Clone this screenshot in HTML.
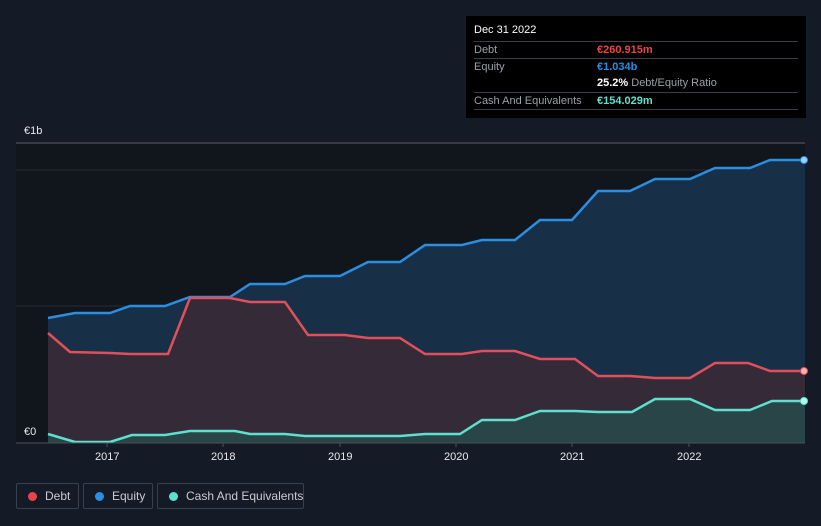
<!DOCTYPE html><html><head><style>
body{margin:0;background:#151b26;font-family:"Liberation Sans",sans-serif;width:821px;height:526px;overflow:hidden;position:relative}
.tt{position:absolute;left:466px;top:16px;width:340px;height:102px;background:#000;font-size:11px;color:#9aa0a8}
.tt .r{position:absolute;left:8px;width:324px;border-top:1px solid #3a3f47;height:16px;line-height:16px}
.tt .v{position:absolute;left:123px;font-weight:bold}
.lg{position:absolute;top:483px;height:26px;border:1px solid #3a404a;border-radius:2px;color:#c8ccd2;font-size:12px;line-height:24px;box-sizing:border-box;white-space:nowrap}
.lg i{position:absolute;left:11px;top:8px;width:9px;height:9px;border-radius:50%}
.lg span{position:absolute;left:28px}
.ax{position:absolute;color:#e6e8eb;font-size:11px}
</style></head><body>
<svg width="821" height="526" style="position:absolute;left:0;top:0">
<rect x="16" y="143" width="789" height="300" fill="#11151c"/>
<line x1="16" y1="143" x2="805" y2="143" fill="none" stroke="#5a5f68" stroke-width="1"/>
<line x1="16" y1="170" x2="805" y2="170" stroke="#262c36"/>
<line x1="16" y1="306" x2="805" y2="306" stroke="#262c36"/>
<polygon fill="#173048" points="48,318 75,313 110,313 130,306 165,306 190,297 230,297 250,284 285,284 305,276 340,276 368,262 400,262 425,245 462,245 482,240 515,240 540,220 572,220 598,191 630,191 655,179 690,179 715,168 750,168 770,160 805,160 805,443 48,443"/>
<polygon fill="#342a38" points="48,333 70,352 110,353 130,354 168,354 190,298 230,298 250,302 285,302 308,335 345,335 368,338 400,338 425,354 462,354 482,351 515,351 540,359 575,359 598,376 630,376 655,378 690,378 715,363 748,363 770,371 805,371 805,443 48,443"/>
<polygon fill="#2a4548" points="48,434 75,442 110,442 132,435 165,435 190,431 235,431 250,434 285,434 305,436 400,436 425,434 460,434 482,420 515,420 540,411 575,411 598,412 632,412 655,399 690,399 715,410 750,410 772,401 805,401 805,443 48,443"/>
<polyline fill="none" stroke="#2b8ee0" stroke-width="2.5" points="48,318 75,313 110,313 130,306 165,306 190,297 230,297 250,284 285,284 305,276 340,276 368,262 400,262 425,245 462,245 482,240 515,240 540,220 572,220 598,191 630,191 655,179 690,179 715,168 750,168 770,160 805,160"/>
<polyline fill="none" stroke="#e0505a" stroke-width="2.5" points="48,333 70,352 110,353 130,354 168,354 190,298 230,298 250,302 285,302 308,335 345,335 368,338 400,338 425,354 462,354 482,351 515,351 540,359 575,359 598,376 630,376 655,378 690,378 715,363 748,363 770,371 805,371"/>
<polyline fill="none" stroke="#5ee0cc" stroke-width="2.5" points="48,434 75,442 110,442 132,435 165,435 190,431 235,431 250,434 285,434 305,436 400,436 425,434 460,434 482,420 515,420 540,411 575,411 598,412 632,412 655,399 690,399 715,410 750,410 772,401 805,401"/>
<line x1="16" y1="443" x2="805" y2="443" stroke="#4a505a"/>
<g stroke="#4a505a"><line x1="107" y1="443" x2="107" y2="447"/><line x1="223" y1="443" x2="223" y2="447"/><line x1="340" y1="443" x2="340" y2="447"/><line x1="456" y1="443" x2="456" y2="447"/><line x1="572" y1="443" x2="572" y2="447"/><line x1="689" y1="443" x2="689" y2="447"/></g>
<circle cx="804" cy="160" r="3.5" fill="#9fd0ff" stroke="#2b8ee0"/>
<circle cx="804" cy="371" r="3.5" fill="#ffb0b0" stroke="#e0505a"/>
<circle cx="804" cy="401" r="3.5" fill="#b0fff0" stroke="#5ee0cc"/>
</svg>
<div class="ax" style="left:24px;top:125px">€1b</div>
<div class="ax" style="left:16px;top:424px;background:#11151c;padding:2px 8px">€0</div>
<div class="ax" style="left:95px;top:451px">2017</div>
<div class="ax" style="left:211px;top:451px">2018</div>
<div class="ax" style="left:328px;top:451px">2019</div>
<div class="ax" style="left:444px;top:451px">2020</div>
<div class="ax" style="left:560px;top:451px">2021</div>
<div class="ax" style="left:677px;top:451px">2022</div>
<div class="tt">
<div style="position:absolute;left:8px;top:8px;color:#fff;font-size:11px">Dec 31 2022</div>
<div class="r" style="top:25px">Debt<span class="v" style="color:#e8454b">€260.915m</span></div>
<div class="r" style="top:42px">Equity<span class="v" style="color:#2b8ee0">€1.034b</span></div>
<div class="r" style="top:59px;border-top:none"><span class="v" style="color:#fff">25.2% <b style="color:#9aa0a8;font-weight:normal">Debt/Equity Ratio</b></span></div>
<div class="r" style="top:76px">Cash And Equivalents<span class="v" style="color:#5ee0cc">€154.029m</span></div>
<div class="r" style="top:93px;height:0"></div>
</div>
<div class="lg" style="left:16px;width:63px"><i style="background:#e8454b"></i><span>Debt</span></div>
<div class="lg" style="left:83px;width:70px"><i style="background:#2b8ee0"></i><span>Equity</span></div>
<div class="lg" style="left:157px;width:147px"><i style="background:#5ee0cc"></i><span>Cash And Equivalents</span></div>
</body></html>
